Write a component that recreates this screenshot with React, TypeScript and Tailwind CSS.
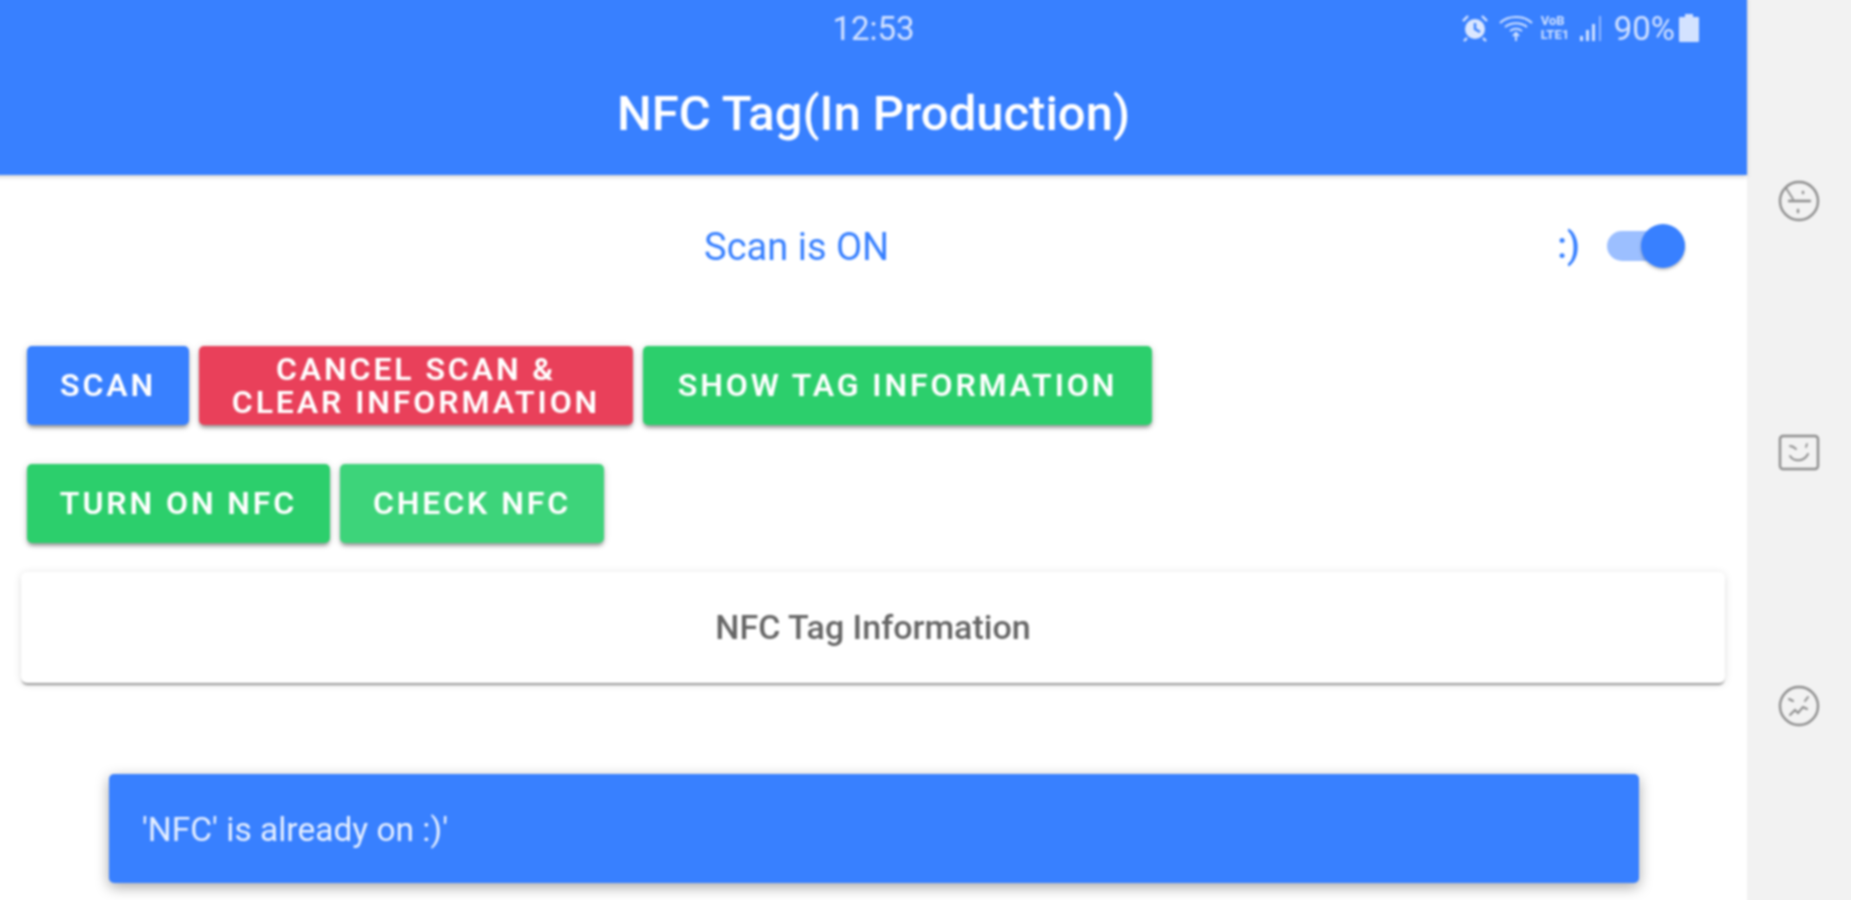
import React from "react";

function Btn({ className, children }: { className: string; children: React.ReactNode }) {
  return (
    <div
      className={`flex h-[79px] items-center justify-center rounded-[5px] text-center text-[32px] leading-[33px] font-semibold tracking-[2.9px] text-white shadow-[0_4px_4px_-2px_rgba(0,0,0,0.3),0_2px_4px_0_rgba(0,0,0,0.18),0_1px_8px_0_rgba(0,0,0,0.12)] ${className}`}
    >
      {children}
    </div>
  );
}

function StatusIcons() {
  return (
    <div className="flex flex-1 justify-end">
      <div className="mr-[48px] flex items-center">
        <svg width="28" height="28" viewBox="0 0 28 28" className="mr-[10px]">
          <circle cx="14" cy="15" r="10" fill="#dbe7ff" />
          <path d="M14 9v6l5 3" stroke="#3880ff" strokeWidth="2.4" fill="none" />
          <path d="M2 7l5-5M26 7l-5-5M6 24l-3 3M22 24l3 3" stroke="#dbe7ff" strokeWidth="2.4" />
        </svg>
        <svg width="34" height="28" viewBox="0 0 34 28" className="mr-[8px]" fill="none" stroke="#cfe0ff" strokeWidth="2">
          <path d="M1 9C9 1 25 1 33 9" />
          <path d="M6 13c6-5 16-5 22 0" />
          <path d="M11 17c4-3 8-3 12 0" />
          <path d="M17 18v9" />
          <path d="M14 22l3-3 3 3" />
        </svg>
        <div className="mr-[3px] flex w-[35px] flex-col text-[13px] leading-[14px] font-bold text-[#cfe0ff]">
          <span>VoB</span>
          <span>LTE1</span>
        </div>
        <svg width="24" height="26" viewBox="0 0 24 26" className="mr-[11px]">
          <path d="M1 26v-5h3v5zM7 26V15h3v11zM13 26V9h3v17z" fill="#cfe0ff" />
          <path d="M20 26V1h2v25z" fill="#8fb5ff" />
        </svg>
        <span className="mr-[4px] text-[33px] leading-none text-[#d3e2ff]">90%</span>
        <svg width="20" height="28" viewBox="0 0 20 28">
          <path d="M6 0h8v3h5a1 1 0 0 1 1 1v23a1 1 0 0 1-1 1H1a1 1 0 0 1-1-1V4a1 1 0 0 1 1-1h5z" fill="#d3e2ff" />
        </svg>
      </div>
    </div>
  );
}

function Face1() {
  return (
    <svg width="42" height="42" viewBox="0 0 42 42" fill="none" stroke="#8d8d8d" strokeWidth="2.4" strokeLinecap="round">
      <circle cx="21" cy="21" r="19" />
      <path d="M8 8l7 11" strokeWidth="1.8" />
      <path d="M11 21h21" />
      <path d="M25 12v1M20 30v2" />
    </svg>
  );
}
function Face2() {
  return (
    <svg width="42" height="42" viewBox="0 0 42 42" fill="none" stroke="#8d8d8d" strokeWidth="2.4" strokeLinecap="round">
      <rect x="2" y="4" width="38" height="33" rx="3" />
      <path d="M12 14c3 0 5 2 6 3M29 12l-1 3" strokeWidth="1.8" />
      <path d="M12 24c4 6 14 6 18-2" strokeWidth="2" />
    </svg>
  );
}
function Face3() {
  return (
    <svg width="42" height="42" viewBox="0 0 42 42" fill="none" stroke="#8d8d8d" strokeWidth="2.4" strokeLinecap="round">
      <circle cx="21" cy="21" r="19" />
      <path d="M11 14l4 2M30 12l-3 4" strokeWidth="2" />
      <path d="M12 30l5-5 3 3 5-6 4 2" strokeWidth="2" />
    </svg>
  );
}

export default function App() {
  return (
    <div className="h-[900px] w-[1851px] overflow-hidden">
      <div className="mt-[-4px] ml-[-4px] flex h-[908px] w-[1859px] bg-white font-['Roboto',sans-serif] blur-[0.8px]">
        <main className="relative flex w-[1751px] flex-col">
          <header className="h-[179px] bg-[#3880ff] pt-[4px] pl-[4px] text-white shadow-[0_2px_4px_rgba(0,0,0,0.18)]">
            <div className="flex h-[56px] items-center">
              <div className="flex-1" />
              <span className="text-[33px] leading-none text-[#d3e2ff]">12:53</span>
              <StatusIcons />
            </div>
            <h1 className="pt-[29px] text-center text-[49px] leading-[58px] font-medium">NFC Tag(In Production)</h1>
          </header>

          <div className="pl-[4px]">
            <section className="flex h-[142px] items-center pr-[62px] text-[#3880ff]">
              <span className="flex-1 pt-[3px] pl-[36px] text-center text-[38px]">Scan is ON</span>
              <span className="mr-[27px] text-[37px] font-medium">:)</span>
              <div className="relative h-[30px] w-[78px] rounded-full bg-[#9cbfff]">
                <div className="absolute top-[-7px] right-0 h-[44px] w-[44px] rounded-full bg-[#3880ff] shadow-[0_2px_3px_rgba(0,0,0,0.25)]" />
              </div>
            </section>

            <div className="mt-[29px] flex flex-col gap-[39px] pl-[27px]">
              <div className="flex gap-[10px]">
                <Btn className="w-[162px] bg-[#3880ff]">SCAN</Btn>
                <Btn className="w-[434px] bg-[#e9405a]">
                  CANCEL SCAN &amp;
                  <br />
                  CLEAR INFORMATION
                </Btn>
                <Btn className="w-[509px] bg-[#2ccf6c]">SHOW TAG INFORMATION</Btn>
              </div>
              <div className="flex gap-[10px]">
                <Btn className="w-[303px] bg-[#2ccf6c]">TURN ON NFC</Btn>
                <Btn className="w-[264px] bg-[#3dd47a]">CHECK NFC</Btn>
              </div>
            </div>

            <div className="mt-[29px] ml-[21px] flex h-[111px] w-[1704px] items-center justify-center rounded-[6px] bg-white text-[34px] font-medium text-[#666666] shadow-[0_3px_2px_-1px_rgba(0,0,0,0.38),0_1px_8px_0_rgba(0,0,0,0.12)]">
              NFC Tag Information
            </div>
          </div>

          <div className="absolute top-[778px] left-[113px] flex h-[109px] w-[1530px] items-center rounded-[5px] bg-[#3880ff] pt-[3px] pl-[33px] text-[33.5px] text-[#e6efff] shadow-[0_4px_14px_rgba(0,0,0,0.35)]">
            'NFC' is already on :)'
          </div>
        </main>

        <aside className="flex flex-1 flex-col items-center bg-[#f2f2f2] pt-[184px] pr-[4px]">
          <Face1 />
          <div className="mt-[210px]">
            <Face2 />
          </div>
          <div className="mt-[211px]">
            <Face3 />
          </div>
        </aside>
      </div>
    </div>
  );
}
